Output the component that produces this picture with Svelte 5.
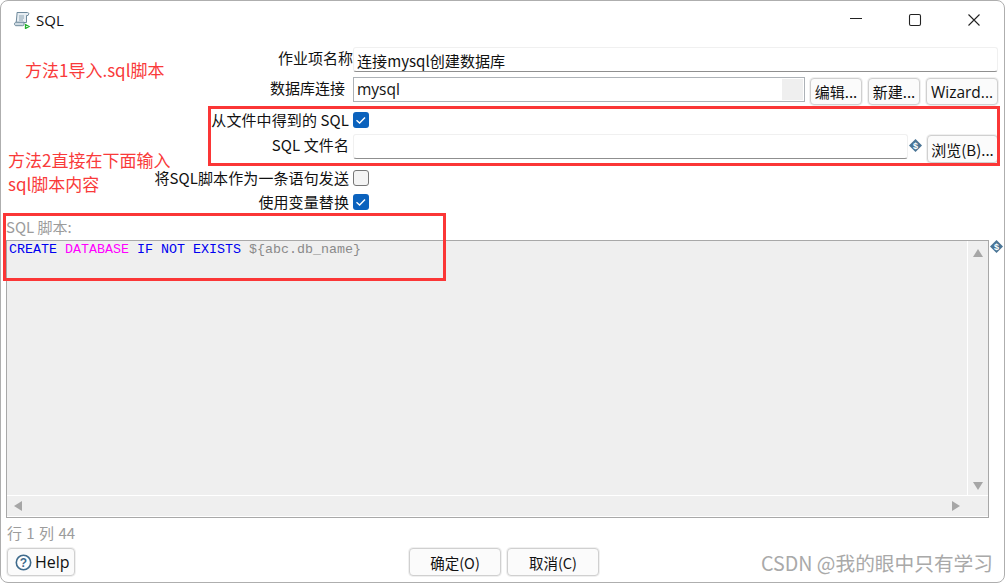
<script>
  const tick = "M3.5 8.2 L6.6 11 L12 5.4";
</script>

<div class="window">
  <header class="titlebar">
    <div class="title">
      <svg class="appicon" width="18" height="18" viewBox="0 0 18 18" aria-hidden="true">
        <path d="M4 1.5h10.5c1 0 1.5 .8 1.2 1.6L15 4.5H13.5V11.5H3.2L4 3z" fill="#e6edf2" stroke="#6f8a9c" stroke-width="1"/>
        <path d="M1.5 13c0-1.2 .8-1.8 1.7-1.8H11v2.2c0 .8-.6 1.3-1.3 1.3H3c-.8 0-1.5-.7-1.5-1.7z" fill="#cfdbe3" stroke="#6f8a9c" stroke-width="1"/>
        <path d="M6 5h5M6 7h5M6 9h4" stroke="#8da3b2" stroke-width="1"/>
        <path d="M12.5 13.5v4l3.5-2z" fill="#fff" stroke="#25b02e" stroke-width="1.3"/>
      </svg>
      <span>SQL</span>
    </div>
    <div class="controls">
      <svg width="14" height="14" viewBox="0 0 14 14" aria-hidden="true"><path d="M1 5.5h12" stroke="#222" stroke-width="1"/></svg>
      <svg width="14" height="14" viewBox="0 0 14 14" aria-hidden="true"><rect x="1.5" y="1.5" width="11" height="11" rx="1.5" fill="none" stroke="#222" stroke-width="1.1"/></svg>
      <svg width="14" height="14" viewBox="0 0 14 14" aria-hidden="true"><path d="M1.5 1.5l11 11M12.5 1.5l-11 11" stroke="#222" stroke-width="1.1"/></svg>
    </div>
  </header>

  <section class="form">
    <div class="label first">作业项名称</div>
    <div class="field"><div class="input">连接mysql创建数据库</div></div>

    <div class="label second">数据库连接</div>
    <div class="field conn">
      <div class="combo"><span>mysql</span><i></i></div>
      <button>编辑...</button>
      <button>新建...</button>
      <button class="wizard">Wizard...</button>
    </div>

    <div class="label">从文件中得到的 SQL</div>
    <div class="field">
      <span class="check on"><svg width="16" height="16" viewBox="0 0 16 16" aria-hidden="true"><path d={tick} fill="none" stroke="#fff" stroke-width="1.4"/></svg></span>
    </div>

    <div class="label raised">SQL 文件名</div>
    <div class="field file spaced">
      <div class="input"></div>
      <svg class="var" width="13" height="13" viewBox="0 0 13 13" aria-hidden="true"><path d="M6.5 0L13 6.5 6.5 13 0 6.5z" fill="#4a7596"/><text x="6.5" y="9.6" text-anchor="middle" font-size="9" font-weight="700" fill="#fff" font-family="Liberation Sans">$</text></svg>
      <button class="browse">浏览(B)...</button>
    </div>

    <div class="label">将SQL脚本作为一条语句发送</div>
    <div class="field"><span class="check"></span></div>

    <div class="label">使用变量替换</div>
    <div class="field">
      <span class="check on"><svg width="16" height="16" viewBox="0 0 16 16" aria-hidden="true"><path d={tick} fill="none" stroke="#fff" stroke-width="1.4"/></svg></span>
    </div>
  </section>

  <div class="sql-label">SQL 脚本:</div>

  <div class="editor-row">
    <div class="editor">
      <div class="editor-main">
        <pre class="code"><span class="kw">CREATE</span> <span class="db">DATABASE</span> <span class="kw">IF NOT EXISTS</span> <span class="var-text">{'${abc.db_name}'}</span></pre>
        <div class="vbar">
          <svg width="10" height="8" viewBox="0 0 10 8" aria-hidden="true"><path d="M5 0l5 8H0z" fill="#a6a6a6"/></svg>
          <svg width="10" height="8" viewBox="0 0 10 8" aria-hidden="true"><path d="M5 8L0 0h10z" fill="#a6a6a6"/></svg>
        </div>
      </div>
      <div class="hbar">
        <svg width="8" height="10" viewBox="0 0 8 10" aria-hidden="true"><path d="M0 5l8-5v10z" fill="#a6a6a6"/></svg>
        <svg width="8" height="10" viewBox="0 0 8 10" aria-hidden="true"><path d="M8 5L0 0v10z" fill="#a6a6a6"/></svg>
      </div>
    </div>
    <svg class="var" width="13" height="13" viewBox="0 0 13 13" aria-hidden="true"><path d="M6.5 0L13 6.5 6.5 13 0 6.5z" fill="#4a7596"/><text x="6.5" y="9.6" text-anchor="middle" font-size="9" font-weight="700" fill="#fff" font-family="Liberation Sans">$</text></svg>
  </div>

  <div class="status">行 1 列 44</div>

  <footer class="footer">
    <button class="help">
      <svg width="17" height="17" viewBox="0 0 17 17" aria-hidden="true"><circle cx="8.5" cy="8.5" r="7.2" fill="#fff" stroke="#3f6b8c" stroke-width="1.6"/><text x="8.5" y="12.6" text-anchor="middle" font-size="12" font-weight="700" fill="#3f6b8c" font-family="Liberation Sans">?</text></svg>
      Help
    </button>
    <div class="actions">
      <button class="wide">确定(O)</button>
      <button class="wide">取消(C)</button>
    </div>
  </footer>

  <div class="note n1">方法1导入.sql脚本</div>
  <div class="note n2">方法2直接在下面输入<br />sql脚本内容</div>
  <div class="mark m1"></div>
  <div class="mark m2"></div>
  <div class="watermark">CSDN @我的眼中只有学习</div>
</div>

<style>
  :global(body) { margin: 0; background: #fff; }
  * { box-sizing: border-box; }
  .window {
    position: relative;
    width: 1005px;
    height: 583px;
    overflow: hidden;
    background: #fff;
    border: 1px solid #aeaeae;
    border-radius: 8px;
    font-family: "Noto Sans CJK SC", "Noto Sans", sans-serif;
    font-size: 15px;
    color: #111;
    display: flex;
    flex-direction: column;
  }
  .titlebar {
    height: 38px;
    flex: none;
    display: flex;
    align-items: center;
    justify-content: space-between;
    padding: 0 23px 0 12px;
  }
  .title { display: flex; align-items: center; gap: 5px; font-family: "Open Sans", sans-serif; font-size: 15px; }
  .appicon { display: block; }
  .controls { display: flex; gap: 45px; align-items: center; }
  .controls svg { display: block; }

  .form {
    display: grid;
    grid-template-columns: 352px 1fr;
    grid-template-rows: 25px 35px 26px 33px 24px 24px;
    margin-top: 8px;
    padding-right: 6px;
    flex: none;
  }
  .label {
    text-align: right;
    padding-right: 4px;
    line-height: 22px;
    white-space: nowrap;
    align-self: center;
    letter-spacing: 0.1px;
  }
  .label.first { padding-right: 0; margin-bottom: 3px; letter-spacing: 0; }
  .label.second { padding-right: 8px; margin-bottom: 3px; letter-spacing: 0; }
  .label.raised { margin-bottom: 9px; }
  .spaced { margin-bottom: 6px; }
  .field { display: flex; align-items: center; min-width: 0; }
  .input {
    flex: 1;
    height: 25px;
    padding-left: 3px;
    background: #fff;
    border: 1px solid #f0f0f0;
    border-bottom: 1px solid #8f8f8f;
    border-radius: 3px;
    line-height: 24px;
    font-size: 15.1px;
  }
  .conn { gap: 5px; }
  .combo {
    width: 452px;
    height: 25px;
    flex: none;
    border: 1px solid #adb2b7;
    padding-left: 3px;
    display: flex;
    justify-content: space-between;
    font-family: "Open Sans", sans-serif;
    font-size: 15.5px;
    line-height: 23px;
  }
  .combo i { display: block; width: 21px; margin: 1px; background: #efefef; }
  button {
    font: inherit;
    font-size: 15px;
    color: #111;
    background: #fbfbfb;
    border: 1px solid #d0d0d0;
    border-radius: 4px;
    padding: 0;
    height: 28px;
    box-shadow: 0 0 0 1px #f0f0f0;
    white-space: nowrap;
  }
  .conn button { width: 52px; height: 27px; margin-top: 4px; }
  .conn button + button { margin-left: 1px; }
  .conn .wizard { width: 72px; font-family: "Open Sans", sans-serif; font-size: 15.5px; }
  .file .input { flex: none; width: 555px; }
  .var { display: block; flex: none; }
  .file .var { margin: 0 0 2px 1px; }
  .browse { width: 71px; margin: 5px 0 0 5px; }
  .check {
    display: block;
    width: 16px;
    height: 16px;
    border-radius: 3px;
    background: #f4f4f4;
    border: 1px solid #777;
  }
  .check.on { background: #0b62bd; border: 0; }
  .check svg { display: block; }

  .sql-label {
    color: #9c9c9c;
    margin: 3px 0 0 5px;
    height: 23px;
    line-height: 20px;
    font-size: 15px;
    flex: none;
  }
  .editor-row {
    margin: 0 0 0 5px;
    flex: none;
    height: 278px;
    display: flex;
    align-items: flex-start;
    gap: 1px;
  }
  .editor {
    width: 983px;
    height: 278px;
    flex: none;
    border: 1px solid #a8a8a8;
    background: #efefef;
    display: flex;
    flex-direction: column;
  }
  .editor-main { flex: 1; display: flex; min-height: 0; border-bottom: 1px solid #fff; }
  .code {
    flex: 1;
    margin: 0;
    padding: 1px 0 0 2px;
    font-family: "Liberation Mono", monospace;
    font-size: 13.33px;
    line-height: 15px;
  }
  .kw { color: #0000f0; }
  .db { color: #ff00ff; }
  .var-text { color: #8a8a8a; }
  .vbar {
    width: 21px;
    flex: none;
    border-left: 1px solid #fff;
    display: flex;
    flex-direction: column;
    align-items: center;
    justify-content: space-between;
    padding: 8px 0 5px;
  }
  .vbar svg, .hbar svg { display: block; }
  .hbar {
    height: 21px;
    flex: none;
    display: flex;
    align-items: center;
    justify-content: space-between;
    padding: 0 28px 0 7px;
    border-bottom: 1px solid #fff;
  }
  .status {
    color: #9c9c9c;
    margin: 4px 0 0 6px;
    height: 22px;
    line-height: 22px;
    font-size: 15px;
    word-spacing: 1px;
    flex: none;
  }
  .footer {
    display: flex;
    margin-top: 4px;
    height: 28px;
    padding-left: 6px;
    flex: none;
  }
  .help {
    width: 68px;
    flex: none;
    display: flex;
    align-items: center;
    gap: 3px;
    padding-left: 7px;
    font-family: "Open Sans", sans-serif;
    font-size: 16px;
  }
  .help svg { display: block; }
  .actions { margin-left: 334px; display: flex; gap: 6px; }
  .wide { width: 92px; font-size: 14.5px; }

  .note { position: absolute; color: #f93a3a; font-size: 17px; line-height: 24px; white-space: nowrap; }
  .n1 { left: 24px; top: 57px; }
  .n2 { left: 7px; top: 147px; }
  .mark { position: absolute; border: 3px solid #fb3636; pointer-events: none; }
  .m1 { left: 207px; top: 105px; width: 792px; height: 60px; }
  .m2 { left: 2px; top: 212px; width: 443px; height: 68px; }
  .watermark {
    position: absolute;
    right: 11px;
    top: 549px;
    font-size: 19.7px;
    line-height: 26px;
    color: #a9a9a9;
    white-space: nowrap;
  }
</style>
